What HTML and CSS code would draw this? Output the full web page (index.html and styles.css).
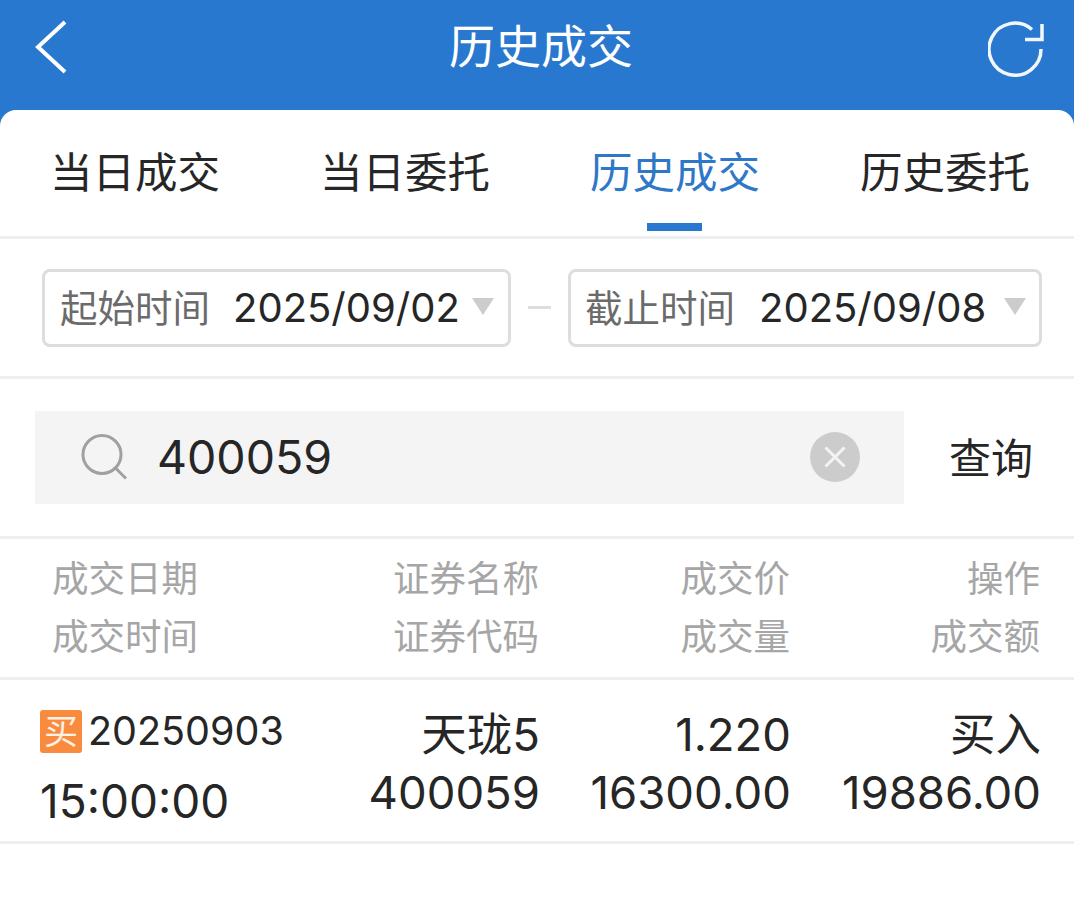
FILE: index.html
```html
<!DOCTYPE html>
<html lang="zh-CN">
<head>
  <meta charset="UTF-8" />
  <meta name="viewport" content="width=device-width, initial-scale=1.0"/>
  <title>历史成交</title>
  <link rel="stylesheet" href="styles.css">
</head>
<body>
  <header class="top-bar">
    <svg class="back-icon" width="34" height="54" viewBox="0 0 34 54">
      <path d="M31 2 L4 27 L31 52" />
    </svg>
    <h1>历史成交</h1>
    <svg class="refresh-icon" width="56" height="56" viewBox="0 0 56 56">
      <path d="M53 28 A26 26 0 1 1 44 8.500" />
      <path d="M54 3 V18.500 H37" />
    </svg>
  </header>

  <main class="sheet">
    <nav class="tabs">
      <a class="tab">当日成交</a>
      <a class="tab">当日委托</a>
      <a class="tab active">历史成交</a>
      <a class="tab">历史委托</a>
    </nav>

    <div class="date-row">
      <div class="date-box start">
        <span class="date-label">起始时间</span>
        <span class="date-value">2025/09/02</span>
        <span class="arrow"></span>
      </div>
      <span class="dash"></span>
      <div class="date-box end">
        <span class="date-label">截止时间</span>
        <span class="date-value">2025/09/08</span>
        <span class="arrow"></span>
      </div>
    </div>

    <div class="search-row">
      <div class="search-box">
        <svg class="search-icon" width="46" height="46" viewBox="0 0 46 46">
          <circle cx="21" cy="20.500" r="19" />
          <path d="M33.500 33 L45 44.500" />
        </svg>
        <span class="search-text">400059</span>
        <svg class="clear-icon" width="50" height="50" viewBox="0 0 50 50">
          <circle class="clear-bg" cx="25" cy="25" r="25" />
          <path class="clear-x" d="M15.500 15.500 L34.500 34.500 M34.500 15.500 L15.500 34.500" />
        </svg>
      </div>
      <a class="search-btn">查询</a>
    </div>

    <div class="table-row table-head">
      <div class="cell first">成交日期<br>成交时间</div>
      <div class="cell">证券名称<br>证券代码</div>
      <div class="cell">成交价<br>成交量</div>
      <div class="cell">操作<br>成交额</div>
    </div>

    <div class="table-row trade">
      <div class="cell first">
        <div class="trade-date"><span class="badge">买</span>20250903</div>
        <div class="trade-time">15:00:00</div>
      </div>
      <div class="cell">天珑5<br>400059</div>
      <div class="cell">1.220<br>16300.00</div>
      <div class="cell">买入<br>19886.00</div>
    </div>
  </main>
</body>
</html>
```

FILE: styles.css
```css
html, body {
  margin: 0;
  padding: 0;
}

body {
  width: 1074px;
  height: 904px;
  overflow: hidden;
  background-color: #ffffff;
  color: #262626;
  font-family: Inter, "Noto Sans CJK SC", sans-serif;
}

.top-bar {
  height: 130px;
  background-color: #2878d0;
  color: #ffffff;
  display: grid;
  grid-template-columns: 1fr auto 1fr;
  align-items: start;
  padding: 0 28px 0 36px;
  box-sizing: border-box;
}

.top-bar h1 {
  margin: 0;
  font-size: 46px;
  font-weight: 400;
  line-height: 92px;
}

.back-icon {
  margin-top: 20px;
  margin-left: -2px;
  fill: none;
  stroke: #ffffff;
  stroke-width: 4;
}

.refresh-icon {
  justify-self: end;
  margin-top: 21px;
  margin-right: 2px;
  fill: none;
  stroke: #f2f7fc;
  stroke-width: 3.500;
}

.sheet {
  margin-top: -20px;
  background-color: #ffffff;
  border-radius: 16px 16px 0 0;
}

.tabs {
  display: grid;
  grid-template-columns: repeat(4, 270px);
  height: 126px;
  border-bottom: 3px solid #eeeeee;
}

.tab {
  position: relative;
  text-align: center;
  font-size: 42.500px;
  line-height: 126px;
  color: #262626;
}

.tab.active {
  color: #2f78c8;
}

.tab.active::after {
  content: "";
  position: absolute;
  left: 107px;
  bottom: 5px;
  width: 55px;
  height: 8px;
  background-color: #2878d0;
}

.date-row {
  display: flex;
  align-items: center;
  height: 137px;
  padding: 0 32px 0 42px;
  border-bottom: 3px solid #eeeeee;
}

.date-box {
  display: flex;
  align-items: center;
  height: 78px;
  box-sizing: border-box;
  border: 3px solid #dddddd;
  border-radius: 8px;
  padding-left: 14px;
}

.date-box.start {
  width: 469px;
  padding-left: 15px;
}

.date-box.end {
  width: 474px;
}

.date-label {
  font-size: 37.500px;
  color: #6b6b6b;
  width: 173px;
  margin-bottom: 4px;
}

.date-value {
  font-size: 40px;
  width: 239px;
}

.end .date-label {
  width: 174px;
}

.end .date-value {
  width: 245px;
}

.arrow {
  width: 0;
  height: 0;
  border-left: 11px solid transparent;
  border-right: 11px solid transparent;
  border-top: 17px solid #cccccc;
  margin-bottom: 2px;
}

.dash {
  width: 23px;
  height: 3px;
  margin: 0 17px;
  background-color: #dddddd;
}

.search-row {
  display: flex;
  align-items: center;
  height: 156px;
  padding: 0 0 1px 35px;
  border-bottom: 3px solid #eeeeee;
}

.search-box {
  display: flex;
  align-items: center;
  width: 869px;
  height: 93px;
  background-color: #f4f4f4;
}

.search-icon {
  margin-left: 46px;
  fill: none;
  stroke: #a0a0a0;
  stroke-width: 3;
}

.search-text {
  flex: 1;
  margin-left: 30px;
  font-size: 46.500px;
}

.clear-icon {
  margin-right: 44px;
}

.clear-bg {
  fill: #cccccc;
}

.clear-x {
  fill: none;
  stroke: #f4f4f4;
  stroke-width: 3;
}

.search-btn {
  margin-left: 45px;
  font-size: 42px;
  margin-bottom: 4px;
}

.table-row {
  display: grid;
  grid-template-columns: 335px 204px 251px 250px;
  text-align: right;
  border-bottom: 3px solid #eeeeee;
}

.cell.first {
  text-align: left;
}

.table-head {
  padding-top: 11px;
  box-sizing: border-box;
  height: 141px;
  font-size: 36.500px;
  line-height: 58px;
  color: #a6a6a6;
}

.table-head .first {
  padding-left: 52px;
}

.trade {
  grid-template-columns: 336px 204px 251px 250px;
  padding-top: 26px;
  box-sizing: border-box;
  height: 164px;
  font-size: 45.500px;
  line-height: 58px;
}

.trade .first {
  padding-left: 40px;
}

.trade-date {
  display: flex;
  align-items: center;
  height: 50px;
  font-size: 39.500px;
}

.badge {
  width: 42px;
  height: 43px;
  margin-right: 6px;
  background-color: #f98b3e;
  border-radius: 3px;
  color: #fff1e6;
  font-size: 34px;
  line-height: 43px;
  text-align: center;
}

.trade-time {
  margin-top: 20px;
  height: 50px;
  line-height: 50px;
  font-size: 46px;
}
```
